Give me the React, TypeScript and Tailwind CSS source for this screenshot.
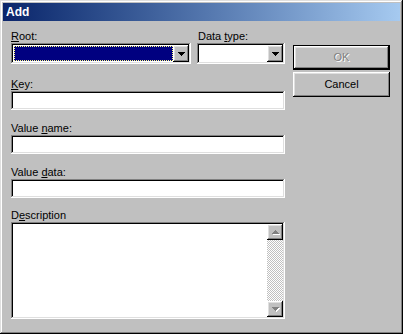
import React from 'react';

const raised =
  'shadow-[inset_-1px_-1px_#000,inset_1px_1px_#fff,inset_-2px_-2px_#808080,inset_2px_2px_#dfdfdf]';
const sunken =
  'shadow-[inset_-1px_-1px_#fff,inset_1px_1px_#808080,inset_-2px_-2px_#dfdfdf,inset_2px_2px_#000]';

function DownArrow({ color = '#000' }: { color?: string }) {
  return (
    <svg width="7" height="4" viewBox="0 0 7 4" shapeRendering="crispEdges">
      <path d="M0 0h7v1H0zM1 1h5v1H1zM2 2h3v1H2zM3 3h1v1H3z" fill={color} />
    </svg>
  );
}

function UpArrow({ color = '#000' }: { color?: string }) {
  return (
    <svg width="7" height="4" viewBox="0 0 7 4" shapeRendering="crispEdges">
      <path d="M3 0h1v1H3zM2 1h3v1H2zM1 2h5v1H1zM0 3h7v1H0z" fill={color} />
    </svg>
  );
}

function Label({ children, className = '' }: { children: React.ReactNode; className?: string }) {
  return <div className={`h-[13px] leading-[13px] text-black ${className}`}>{children}</div>;
}

function Combo({ width, selected }: { width: string; selected?: boolean }) {
  return (
    <div className={`${width} h-[21px] bg-white p-[2px] flex ${sunken}`}>
      <div className="flex-1 p-[1px] pr-0">
        {selected && (
          <div className="h-full bg-[#000080] outline-1 outline-dotted outline-[#ffff80] -outline-offset-1" />
        )}
      </div>
      <div className={`w-[16px] h-full bg-[#c0c0c0] flex items-center justify-center ${raised}`}>
        <DownArrow />
      </div>
    </div>
  );
}

function TextBox() {
  return <div className={`h-[19px] bg-white ${sunken}`} />;
}

function ScrollButton({ up }: { up?: boolean }) {
  return (
    <div className={`w-[16px] h-[16px] bg-[#c0c0c0] flex items-center justify-center ${raised}`}>
      <div className="relative w-[7px] h-[4px]">
        <div className="absolute left-[1px] top-[1px]">
          {up ? <UpArrow color="#fff" /> : <DownArrow color="#fff" />}
        </div>
        <div className="absolute left-0 top-0">
          {up ? <UpArrow color="#808080" /> : <DownArrow color="#808080" />}
        </div>
      </div>
    </div>
  );
}

export default function App() {
  return (
    <div
      className={`w-[403px] h-[334px] bg-[#c0c0c0] p-[3px] flex flex-col font-['Liberation_Sans',Arial,sans-serif] text-[11px] shadow-[inset_-1px_-1px_#000,inset_1px_1px_#dfdfdf,inset_-2px_-2px_#808080,inset_2px_2px_#fff]`}
    >
      <div className="h-[18px] bg-gradient-to-r from-[#0a246a] to-[#a6caf0] flex items-center pl-[3px]">
        <span className="text-white font-bold text-[12px] leading-[18px]">Add</span>
      </div>

      <div className="flex pl-[8px] pt-[9px]">
        <div className="w-[274px] flex flex-col">
          <div className="flex gap-[6px]">
            <div className="w-[180px]">
              <Label>
                <u>R</u>oot:
              </Label>
              <Combo width="w-[180px]" selected />
            </div>
            <div className="w-[88px]">
              <Label className="pl-[1px]">
                Data <u>t</u>ype:
              </Label>
              <Combo width="w-[88px]" />
            </div>
          </div>

          <Label className="mt-[14px]">
            <u>K</u>ey:
          </Label>
          <TextBox />

          <Label className="mt-[12px]">
            Value <u>n</u>ame:
          </Label>
          <TextBox />

          <Label className="mt-[12px]">
            Value <u>d</u>ata:
          </Label>
          <TextBox />

          <Label className="mt-[11px]">
            D<u>e</u>scription
          </Label>
          <div className={`h-[97px] bg-white p-[2px] flex justify-end ${sunken}`}>
            <div className="w-[16px] flex flex-col bg-[repeating-conic-gradient(#c0c0c0_0_25%,#fff_0_50%)] bg-[length:2px_2px]">
              <ScrollButton up />
              <div className="flex-1" />
              <ScrollButton />
            </div>
          </div>
        </div>

        <div className="ml-[8px] pt-[15px] flex flex-col gap-[2px]">
          <div className="w-[97px] h-[25px] border border-black">
            <div className={`w-full h-full bg-[#c0c0c0] flex items-center justify-center text-[#808080] [text-shadow:1px_1px_0_#fff] ${raised}`}>
              OK
            </div>
          </div>
          <div className={`w-[97px] h-[25px] bg-[#c0c0c0] flex items-center justify-center text-black ${raised}`}>
            Cancel
          </div>
        </div>
      </div>
    </div>
  );
}
